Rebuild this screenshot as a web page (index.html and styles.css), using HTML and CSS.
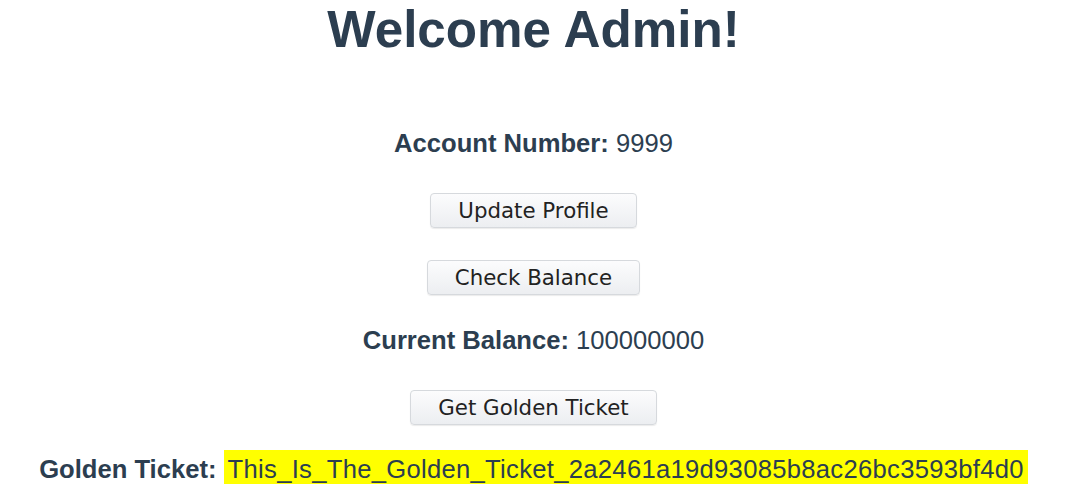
FILE: index.html
```html
<!DOCTYPE html>
<html lang="en">
<head>
  <meta charset="UTF-8" />
  <meta name="viewport" content="width=device-width, initial-scale=1.0"/>
  <title>Admin Dashboard</title>
  <link rel="stylesheet" href="styles.css">
</head>
<body>

  <div class="container">
    <h1>Welcome Admin!</h1>

    <p class="info account"><strong>Account Number:</strong> 9999</p>

    <button class="action first">Update Profile</button>
    <button class="action">Check Balance</button>

    <p class="info balance"><strong>Current Balance:</strong> 100000000</p>

    <button class="action">Get Golden Ticket</button>

    <p class="info ticket"><strong>Golden Ticket:</strong> <mark>This_Is_The_Golden_Ticket_2a2461a19d93085b8ac26bc3593bf4d0</mark></p>
  </div>

</body>
</html>
```

FILE: styles.css
```css
* {
  box-sizing: border-box;
}

body {
  margin: 0;
  padding: 0;
  font-family: 'Liberation Sans', Helvetica, Arial, sans-serif;
  font-size: 25.6px;
  color: #2c3e50;
  background: white;
}

.container {
  display: flex;
  flex-direction: column;
  align-items: center;
  text-align: center;
}

h1 {
  font-size: 51.2px;
  font-weight: bold;
  margin: 0;
}

.info {
  margin: 0;
}

.account {
  margin-top: 70px;
}

.balance {
  margin-top: 31px;
}

.ticket {
  margin-top: 30px;
}

mark {
  background-color: #ffff00;
  color: #2c3e50;
  padding: 5px 4px;
  letter-spacing: 0.3px;
}

.action {
  font-family: 'DejaVu Sans', sans-serif;
  font-size: 21.33px;
  color: #222;
  padding: 4px 27px;
  margin-top: 32px;
  border: 1px solid #d6d9dd;
  border-radius: 4px;
  background: linear-gradient(#fcfcfd, #eceef1);
  box-shadow: 0 1px 1px rgba(0, 0, 0, 0.08);
}

.action.first {
  margin-top: 35px;
}

.balance + .action {
  margin-top: 35px;
}
```
